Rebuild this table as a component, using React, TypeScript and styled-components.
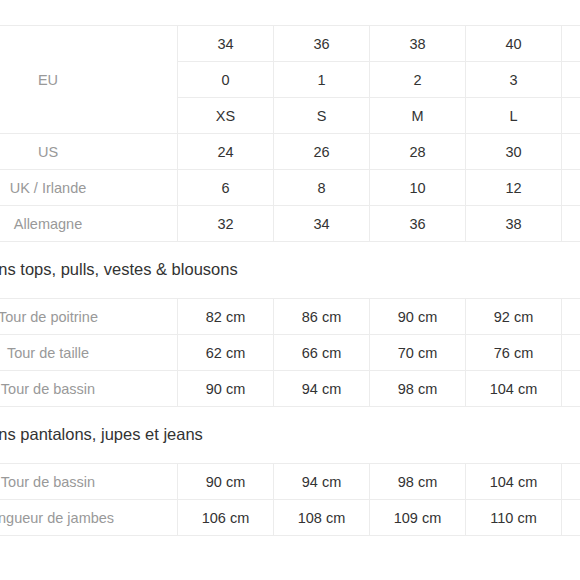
import React from 'react';
import styled, { createGlobalStyle } from 'styled-components';

const GlobalStyle = createGlobalStyle`
  html, body {
    margin: 0;
    padding: 0;
    background: #fff;
    overflow: hidden;
  }
  body {
    font-family: 'Liberation Sans', Arial, sans-serif;
  }
`;

const Page = styled.div`
  width: 740px;
  margin-left: -82px;
  padding-top: 25px;
`;

const Table = styled.table`
  border-collapse: collapse;
  table-layout: fixed;
`;

const LabelCell = styled.td`
  width: 258px;
  height: 35px;
  padding: 0;
  border: 1px solid #ececec;
  text-align: center;
  font-size: 14.5px;
  color: #999;
`;

const Cell = styled.td`
  width: 95px;
  height: 35px;
  padding: 0;
  border: 1px solid #ececec;
  text-align: center;
  font-size: 14.5px;
  color: #333;
`;

const Heading = styled.h3`
  margin: 0;
  padding: 18px 0 19px 11.5px;
  font-size: 16.5px;
  line-height: 19px;
  font-weight: normal;
  color: #333;
  white-space: nowrap;
`;

type Row = { label: string; values: string[] };

const otherSizes: Row[] = [
  { label: 'US', values: ['24', '26', '28', '30', ''] },
  { label: 'UK / Irlande', values: ['6', '8', '10', '12', ''] },
  { label: 'Allemagne', values: ['32', '34', '36', '38', ''] },
];

const euRows = [
  ['34', '36', '38', '40', ''],
  ['0', '1', '2', '3', ''],
  ['XS', 'S', 'M', 'L', ''],
];

const tops: Row[] = [
  { label: 'Tour de poitrine', values: ['82 cm', '86 cm', '90 cm', '92 cm', ''] },
  { label: 'Tour de taille', values: ['62 cm', '66 cm', '70 cm', '76 cm', ''] },
  { label: 'Tour de bassin', values: ['90 cm', '94 cm', '98 cm', '104 cm', ''] },
];

const bottoms: Row[] = [
  { label: 'Tour de bassin', values: ['90 cm', '94 cm', '98 cm', '104 cm', ''] },
  { label: 'Longueur de jambes', values: ['106 cm', '108 cm', '109 cm', '110 cm', ''] },
];

const MeasureTable = ({ rows }: { rows: Row[] }) => (
  <Table>
    <tbody>
      {rows.map((row) => (
        <tr key={row.label}>
          <LabelCell>{row.label}</LabelCell>
          {row.values.map((v, i) => (
            <Cell key={i}>{v}</Cell>
          ))}
        </tr>
      ))}
    </tbody>
  </Table>
);

export default function App() {
  return (
    <>
      <GlobalStyle />
      <Page>
        <Table>
          <tbody>
            {euRows.map((vals, r) => (
              <tr key={r}>
                {r === 0 && <LabelCell rowSpan={3}>EU</LabelCell>}
                {vals.map((v, i) => (
                  <Cell key={i}>{v}</Cell>
                ))}
              </tr>
            ))}
            {otherSizes.map((row) => (
              <tr key={row.label}>
                <LabelCell>{row.label}</LabelCell>
                {row.values.map((v, i) => (
                  <Cell key={i}>{v}</Cell>
                ))}
              </tr>
            ))}
          </tbody>
        </Table>

        <Heading>Tailles dans tops, pulls, vestes &amp; blousons</Heading>
        <MeasureTable rows={tops} />

        <Heading>Tailles dans pantalons, jupes et jeans</Heading>
        <MeasureTable rows={bottoms} />
      </Page>
    </>
  );
}
